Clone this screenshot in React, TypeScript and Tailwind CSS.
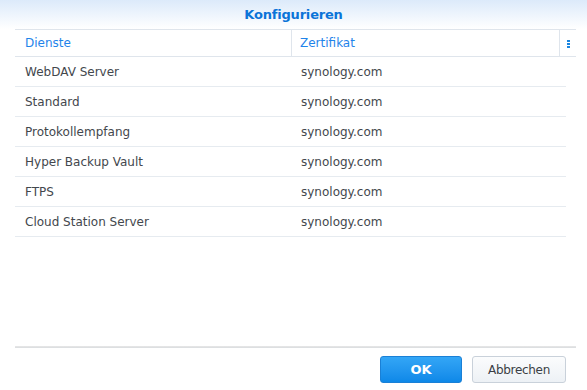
export default function App() {
  const rows = [
    "WebDAV Server",
    "Standard",
    "Protokollempfang",
    "Hyper Backup Vault",
    "FTPS",
    "Cloud Station Server",
  ];
  return (
    <div
      className="w-[587px] h-[390px] bg-white flex flex-col overflow-hidden"
      style={{ fontFamily: '"DejaVu Sans", Verdana, sans-serif' }}
    >
      <div className="h-[29px] shrink-0 flex items-center justify-center bg-gradient-to-b from-[#dceafa] to-[#ffffff]">
        <span className="text-[13px] font-bold tracking-[-0.2px] text-[#0b74d8] leading-none">
          Konfigurieren
        </span>
      </div>
      <div className="ml-[15px] mr-[11px] flex-1 flex flex-col">
        <div className="h-[28px] flex border-t border-b border-[#dfe5ec] text-[12px] text-[#1f84ea]">
          <div className="w-[277px] pl-[10px] flex items-center border-r border-[#dfe5ec]">Dienste</div>
          <div className="w-[268px] pl-[8px] flex items-center border-r border-[#dfe5ec]">Zertifikat</div>
          <div className="flex-1 flex items-center justify-center">
            <div className="flex flex-col gap-[1px] mt-[1px] ml-[1px]">
              <div className="w-[3px] h-[2px] bg-[#1a86e0]" />
              <div className="w-[3px] h-[2px] bg-[#1a86e0]" />
              <div className="w-[3px] h-[2px] bg-[#1a86e0]" />
            </div>
          </div>
        </div>
        <div className="w-[551px] flex flex-col">
          {rows.map((r) => (
            <div key={r} className="h-[30px] flex items-center border-b border-[#e6ebf0] text-[12px] text-[#43474d]">
              <div className="w-[277px] pl-[10px]">{r}</div>
              <div className="pl-[9px]">synology.com</div>
            </div>
          ))}
        </div>
        <div className="flex-1" />
        <div className="h-[2px] bg-gradient-to-b from-[#e8e8e8] to-[#d9dcdf]" />
        <div className="h-[42px] flex items-start justify-end pt-[8px] pr-[10px] gap-[10px]">
          <button className="w-[82px] h-[27px] rounded-[3px] border border-[#1a80d6] bg-gradient-to-b from-[#33a6f6] to-[#0d88e8] text-white text-[13px] font-bold flex items-center justify-center">
            OK
          </button>
          <button className="w-[94px] h-[27px] rounded-[3px] border border-[#c9d1da] bg-gradient-to-b from-[#fbfcfd] to-[#edf1f5] text-[#3a3f45] text-[12px] tracking-[-0.3px] flex items-center justify-center">
            Abbrechen
          </button>
        </div>
      </div>
    </div>
  );
}
